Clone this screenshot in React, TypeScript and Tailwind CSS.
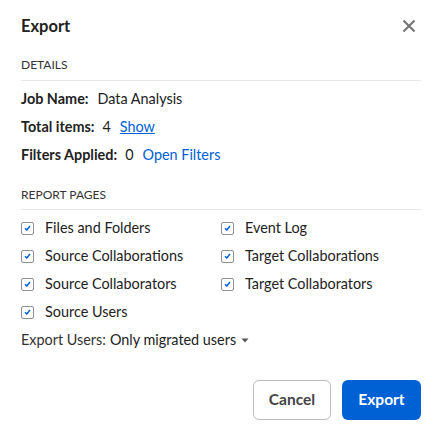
import React from "react";

const pagesLeft = ["Files and Folders", "Source Collaborations", "Source Collaborators", "Source Users"];
const pagesRight = ["Event Log", "Target Collaborations", "Target Collaborators"];

const Check = ({ label }: { label: string }) => (
  <label className="flex items-center h-7 gap-[11px]">
    <span className="flex items-center justify-center w-[13px] h-[13px] border border-[#909090] rounded-[2px] bg-white">
      <svg width="7" height="6" viewBox="0 0 7 6">
        <path d="M1 3.2 L2.8 5 L6 1" fill="none" stroke="#0061d5" strokeWidth="1.5" />
      </svg>
    </span>
    <span className="text-[14.4px] text-[#222]">{label}</span>
  </label>
);

export default function App() {
  return (
    <div className="w-[440px] h-[433px] bg-white font-['Lato',sans-serif] text-[#222] pl-[21px] pr-[19px]">
      {/* Header */}
      <div className="flex items-center justify-between pt-[15px]">
        <h1 className="text-[16.5px] font-bold leading-[22px]">Export</h1>
        <svg width="14" height="14" viewBox="0 0 14 14" className="mr-[5px]">
          <path d="M1.5 1.5 L12.5 12.5 M12.5 1.5 L1.5 12.5" stroke="#777" strokeWidth="2.2" />
        </svg>
      </div>

      {/* Details */}
      <div className="mt-[20px] text-[12px] leading-4 text-[#333] pb-[7px] border-b border-[#e8e8e8]">
        DETAILS
      </div>
      <div className="mt-[4px] text-[14.4px]">
        <div className="h-7 flex items-center">
          <span className="font-bold">Job Name:</span>
          <span className="ml-[9px]">Data Analysis</span>
        </div>
        <div className="h-7 flex items-center">
          <span className="font-bold">Total items:</span>
          <span className="ml-[8px]">4</span>
          <a className="ml-[9px] text-[#0061d5] underline">Show</a>
        </div>
        <div className="h-7 flex items-center">
          <span className="font-bold">Filters Applied:</span>
          <span className="ml-[8px]">0</span>
          <a className="ml-[9px] text-[#0061d5]">Open Filters</a>
        </div>
      </div>

      {/* Report pages */}
      <div className="mt-[18px] text-[12px] leading-4 text-[#333] pb-[6px] border-b border-[#e8e8e8]">
        REPORT PAGES
      </div>
      <div className="mt-[4px] grid grid-cols-[200px_1fr]">
        <div className="flex flex-col">
          {pagesLeft.map((p) => (
            <Check key={p} label={p} />
          ))}
        </div>
        <div className="flex flex-col">
          {pagesRight.map((p) => (
            <Check key={p} label={p} />
          ))}
        </div>
      </div>

      {/* Export users */}
      <div className="h-7 flex items-center text-[14.4px]">
        <span className="text-[#333]">Export Users:</span>
        <span className="ml-[4px]">Only migrated users</span>
        <svg width="8" height="5" viewBox="0 0 8 5" className="ml-[5px]">
          <path d="M0.5 0.5 L7.5 0.5 L4 4.5 Z" fill="#555" />
        </svg>
      </div>

      {/* Footer */}
      <div className="mt-[26px] flex justify-end gap-[11px]">
        <button className="h-[40px] w-[78px] rounded-[6px] border border-[#bcbcbc] bg-white text-[15.5px] font-bold text-[#444]">
          Cancel
        </button>
        <button className="h-[40px] w-[79px] rounded-[6px] bg-[#0061d5] text-[15.5px] font-bold text-white">
          Export
        </button>
      </div>
    </div>
  );
}
